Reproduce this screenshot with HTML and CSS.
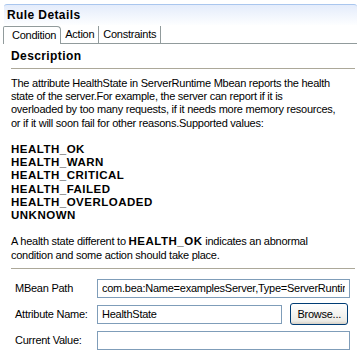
FILE: index.html
```html
<!DOCTYPE html>
<html lang="en">
<head>
  <meta charset="UTF-8">
  <title>Rule Details</title>
  <link rel="stylesheet" href="styles.css">
</head>
<body>
  <div class="rule-panel">
    <div class="panel-title">Rule Details</div>

    <div class="tabs">
      <div class="tab active">Condition</div>
      <div class="tab">Action</div>
      <div class="tab">Constraints</div>
      <div class="tab-fill"></div>
    </div>

    <div class="section">
      <h4 class="section-head">Description</h4>
      <div class="desc">
        <p>The attribute HealthState in ServerRuntime Mbean reports the health<br>
        state of the server.For example, the server can report if it is<br>
        overloaded by too many requests, if it needs more memory resources,<br>
        or if it will soon fail for other reasons.Supported values:</p>
        <p class="values">HEALTH_OK<br>HEALTH_WARN<br>HEALTH_CRITICAL<br>HEALTH_FAILED<br>HEALTH_OVERLOADED<br>UNKNOWN</p>
        <p>A health state different to <b>HEALTH_OK</b> indicates an abnormal<br>
        condition and some action should take place.</p>
      </div>
    </div>

    <div class="form">
      <label>MBean Path</label>
      <input type="text" class="wide" value="com.bea:Name=examplesServer,Type=ServerRuntime">
      <label>Attribute Name:</label>
      <input type="text" value="HealthState">
      <button>Browse...</button>
      <label>Current Value:</label>
      <input type="text" class="wide" value="">
    </div>
  </div>
</body>
</html>
```

FILE: styles.css
```css
body {
  margin: 0;
  background: #fff;
  font-family: "Liberation Sans", Arial, sans-serif;
  font-size: 11px;
  letter-spacing: -0.25px;
  color: #000;
}
b,
.values {
  font-size: 11.5px;
  letter-spacing: 0.5px;
}
.rule-panel {
  padding-top: 4px;
}
.panel-title {
  margin: 0 2px 0 4px;
  height: 20px;
  line-height: 20px;
  padding-left: 3px;
  border-top: 1px solid #a9c6ee;
  border-radius: 3px 3px 0 0;
  background: linear-gradient(#e4ecfb, #fdfeff);
  font-weight: bold;
  font-size: 12px;
  letter-spacing: 0.4px;
}
.tabs {
  display: flex;
  margin: 1px 2px 0 3px;
  height: 18px;
}
.tab {
  padding: 0 4px 0 4px;
  line-height: 17px;
  border-right: 1px solid #919b9c;
  border-bottom: 1px solid #919b9c;
}
.tab.active {
  padding: 0 4px 0 8px;
  border: 1px solid #919b9c;
  border-bottom: none;
  border-radius: 2px 4px 0 0;
}
.tab-fill {
  flex: 1;
  border-bottom: 1px solid #919b9c;
}
.section {
  margin: 0 4px 0 11px;
}
.section-head {
  margin: 0;
  padding: 6px 0 5px;
  font-size: 12px;
  letter-spacing: 0.4px;
  line-height: 13px;
  border-bottom: 1px solid #aca899;
}
.desc {
  padding: 8px 0 6px;
  line-height: 13.2px;
  white-space: nowrap;
  border-bottom: 1px solid #aca899;
}
.desc p {
  margin: 0 0 13.2px;
}
.desc p:last-child {
  margin-bottom: 0;
}
.values {
  font-weight: bold;
}
.form {
  display: grid;
  grid-template-columns: 82px 1fr auto;
  align-items: center;
  row-gap: 7px;
  margin: 10px 9px 0 15px;
}
.form label {
  grid-column: 1;
}
.form input {
  height: 19px;
  box-sizing: border-box;
  border: 1px solid #7f9db9;
  padding: 0 4px;
  font: inherit;
  letter-spacing: inherit;
  min-width: 0;
}
.form input.wide {
  grid-column: 2 / 4;
}
.form button {
  margin: -2px 2px -2px 8px;
  height: 22px;
  padding: 0 6px;
  font: inherit;
  letter-spacing: inherit;
  border: 1px solid #003c74;
  border-radius: 3px;
  background: linear-gradient(#fff, #ecebe6 85%, #d6d0c5);
}
```
